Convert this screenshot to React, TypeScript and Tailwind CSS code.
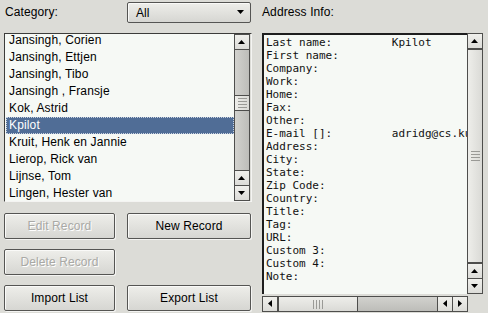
import React from "react";

const names = [
  "Jansingh, Corien",
  "Jansingh, Ettjen",
  "Jansingh, Tibo",
  "Jansingh , Fransje",
  "Kok, Astrid",
  "Kpilot",
  "Kruit, Henk en Jannie",
  "Lierop, Rick van",
  "Lijnse, Tom",
  "Lingen, Hester van",
];

const fields = [
  "Last name:         Kpilot",
  "First name:",
  "Company:",
  "Work:",
  "Home:",
  "Fax:",
  "Other:",
  "E-mail []:         adridg@cs.kun.nl",
  "Address:",
  "City:",
  "State:",
  "Zip Code:",
  "Country:",
  "Title:",
  "Tag:",
  "URL:",
  "Custom 3:",
  "Custom 4:",
  "Note:",
];

function Arrow({ dir }: { dir: "up" | "down" | "left" | "right" }) {
  const pts = {
    up: "0,4 3.5,0 7,4",
    down: "0,0 7,0 3.5,4",
    left: "4,0 4,7 0,3.5",
    right: "0,0 0,7 4,3.5",
  }[dir];
  const horiz = dir === "left" || dir === "right";
  return (
    <svg width={horiz ? 5 : 8} height={horiz ? 8 : 5} viewBox={horiz ? "0 0 5 8" : "0 0 8 5"}>
      <polygon points={pts} fill="#000" />
    </svg>
  );
}

function SBtn({ dir, cls = "" }: { dir: "up" | "down" | "left" | "right"; cls?: string }) {
  return (
    <div
      className={`flex items-center justify-center border border-[#4e4e4c] bg-gradient-to-b from-[#f0f0ec] to-[#dcdcd8] ${cls}`}
    >
      <Arrow dir={dir} />
    </div>
  );
}

function Btn({ label, disabled, w }: { label: string; disabled?: boolean; w: string }) {
  return (
    <div
      className={`${w} h-[26px] flex items-center justify-center rounded-[2px] border border-[#555553] bg-gradient-to-b from-[#eeeeea] to-[#d6d6d2] shadow-[inset_1px_1px_0_#fafaf8,1px_1px_0_#f4f4f2] text-[12px] tracking-[0.1px] ${
        disabled ? "text-[#a9a9a5] [text-shadow:1px_1px_0_#fff]" : "text-black"
      }`}
    >
      {label}
    </div>
  );
}

export default function App() {
  return (
    <div
      className="w-[488px] h-[313px] bg-[#dcdcd7] flex overflow-hidden text-black"
      style={{ fontFamily: '"Liberation Sans", Arial, sans-serif' }}
    >
      {/* left column */}
      <div className="w-[252px] pl-[4px] flex flex-col">
        <div className="h-[33px] pt-[2px] flex">
          <div className="w-[123px] h-[21px] leading-[21px] pl-[1px] text-[12px] tracking-[0.1px]">Category:</div>
          <div className="w-[124px] h-[21px] flex items-center justify-between pl-[8px] pr-[5px] rounded-[2px] border border-[#555553] bg-gradient-to-b from-[#eeeeea] to-[#d6d6d2] shadow-[inset_1px_1px_0_#fafaf8] text-[12px]">
            <span>All</span>
            <Arrow dir="down" />
          </div>
        </div>

        {/* list */}
        <div className="w-[248px] h-[169px] flex border-t border-l border-[#3c3c3a] border-r border-b border-r-[#f4f4f2] border-b-[#f4f4f2]">
          <div className="w-[229px] h-full bg-[#f6f9f5] overflow-hidden">
            <div className="mt-[-2px] flex flex-col">
              {names.map((n) => (
                <div
                  key={n}
                  className={`h-[17px] leading-[17px] pl-[3px] ml-[1px] text-[12px] tracking-[0.15px] whitespace-nowrap ${
                    n === "Kpilot"
                      ? "bg-[#506d96] text-white outline outline-1 outline-dotted outline-[#c9d2e0] -outline-offset-1"
                      : ""
                  }`}
                >
                  {n}
                </div>
              ))}
            </div>
          </div>
          <div className="w-[16px] h-[167px] flex flex-col bg-gradient-to-r from-[#d2d2ce] to-[#bdbdb9] border-x border-[#4e4e4c]">
            <SBtn dir="up" cls="h-[16px] -mx-[1px]" />
            <div className="h-[45px]" />
            <div className="h-[16px] -mx-[1px] border border-[#4e4e4c] bg-gradient-to-r from-[#eeeeea] to-[#dadad6] flex flex-col items-center justify-center gap-[2px]">
              <div className="w-[9px] h-[1px] bg-[#9a9a96]" />
              <div className="w-[9px] h-[1px] bg-[#9a9a96]" />
              <div className="w-[9px] h-[1px] bg-[#9a9a96]" />
              <div className="w-[9px] h-[1px] bg-[#9a9a96]" />
            </div>
            <div className="flex-1" />
            <SBtn dir="up" cls="h-[16px] -mx-[1px]" />
            <SBtn dir="down" cls="h-[16px] -mx-[1px] -mt-[1px]" />
          </div>
        </div>

        {/* buttons */}
        <div className="mt-[11px] grid grid-cols-[111px_124px] gap-x-[12px] gap-y-[10px]">
          <Btn label="Edit Record" disabled w="w-[111px]" />
          <Btn label="New Record" w="w-[124px]" />
          <Btn label="Delete Record" disabled w="w-[111px]" />
          <div />
          <Btn label="Import List" w="w-[111px]" />
          <Btn label="Export List" w="w-[124px]" />
        </div>
      </div>

      {/* right column */}
      <div className="ml-[10px] w-[222px] flex flex-col">
        <div className="h-[33px] pt-[2px]">
          <div className="h-[21px] leading-[21px] text-[12px] tracking-[0.1px]">Address Info:</div>
        </div>
        <div className="h-[261px] flex">
          <div className="w-[205px] h-full bg-[#f6f9f5] border-t-2 border-l-2 border-[#1e1e1e] overflow-hidden pl-[2px] pt-[1px]">
            {fields.map((f) => (
              <div
                key={f}
                className="h-[13px] leading-[13px] text-[11px] whitespace-pre text-[#111]"
                style={{ fontFamily: '"DejaVu Sans Mono", "Liberation Mono", monospace' }}
              >
                {f}
              </div>
            ))}
          </div>
          <div className="w-[16px] h-full flex flex-col bg-gradient-to-r from-[#d2d2ce] to-[#bdbdb9] border-x border-[#4e4e4c]">
            <SBtn dir="up" cls="h-[16px] -mx-[1px]" />
            <div className="h-[214px] -mx-[1px] border border-[#4e4e4c] bg-gradient-to-r from-[#eeeeea] to-[#dadad6] flex flex-col items-center justify-center gap-[2px]">
              <div className="w-[9px] h-[1px] bg-[#9a9a96]" />
              <div className="w-[9px] h-[1px] bg-[#9a9a96]" />
              <div className="w-[9px] h-[1px] bg-[#9a9a96]" />
              <div className="w-[9px] h-[1px] bg-[#9a9a96]" />
            </div>
            <div className="flex-1" />
            <SBtn dir="up" cls="h-[16px] -mx-[1px]" />
            <SBtn dir="down" cls="h-[16px] -mx-[1px] -mt-[1px]" />
          </div>
        </div>
        <div className="mt-[2px] w-[206px] h-[16px] flex bg-gradient-to-b from-[#d2d2ce] to-[#bdbdb9] border-y border-[#4e4e4c]">
          <SBtn dir="left" cls="w-[16px] -my-[1px]" />
          <div className="w-[80px] -my-[1px] border border-[#4e4e4c] bg-gradient-to-b from-[#eeeeea] to-[#dadad6] flex items-center justify-center gap-[2px]">
            <div className="w-[1px] h-[9px] bg-[#9a9a96]" />
            <div className="w-[1px] h-[9px] bg-[#9a9a96]" />
            <div className="w-[1px] h-[9px] bg-[#9a9a96]" />
            <div className="w-[1px] h-[9px] bg-[#9a9a96]" />
          </div>
          <div className="flex-1" />
          <SBtn dir="left" cls="w-[16px] -my-[1px]" />
          <SBtn dir="right" cls="w-[16px] -my-[1px] -ml-[1px]" />
        </div>
      </div>
    </div>
  );
}
